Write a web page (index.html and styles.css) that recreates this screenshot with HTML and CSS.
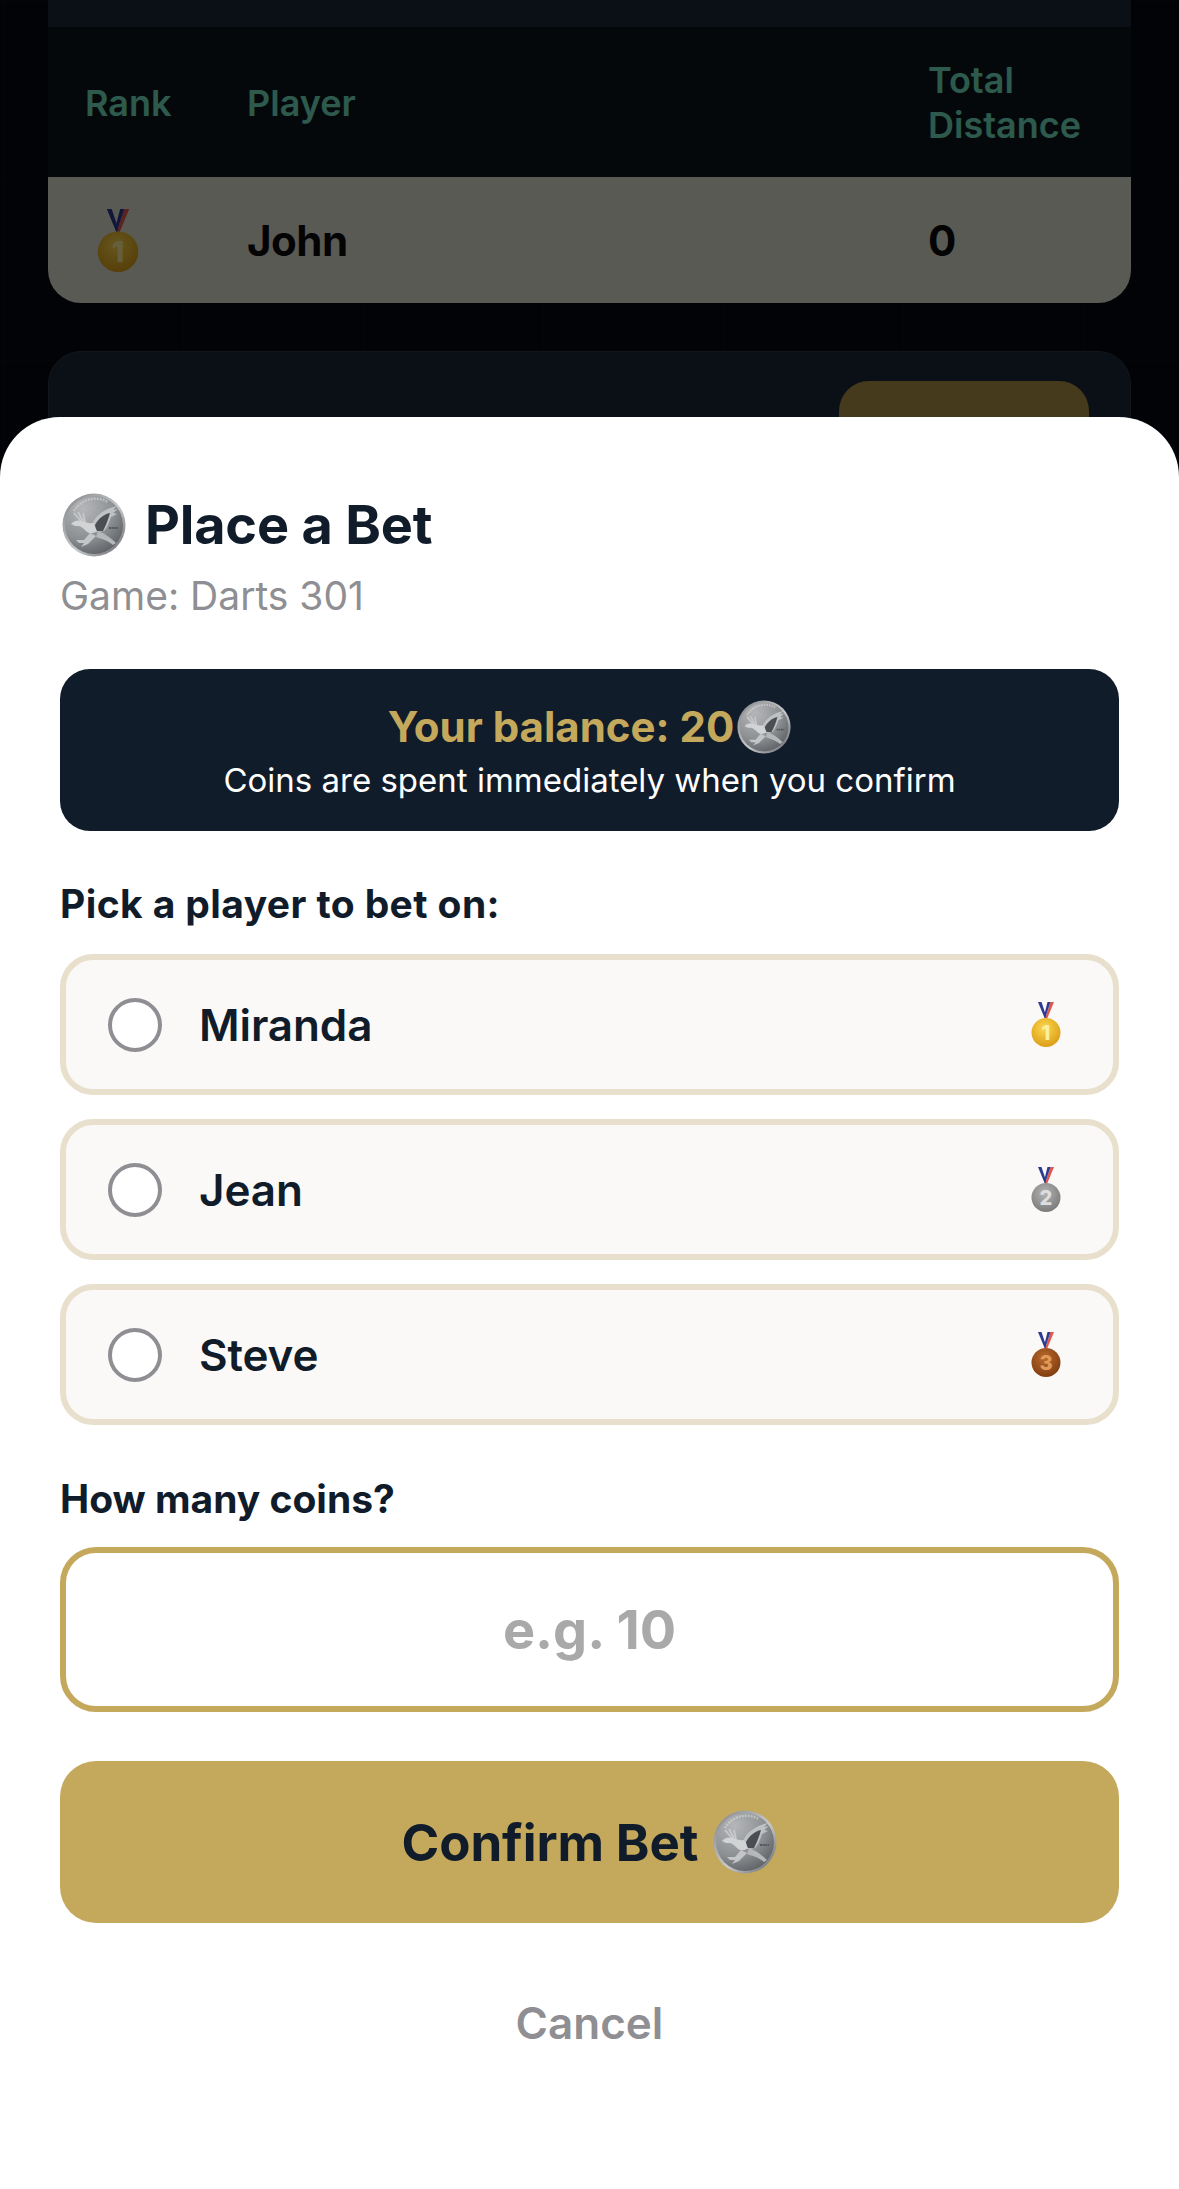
FILE: index.html
```html
<!DOCTYPE html>
<html>
<head>
    <title>Place a Bet</title>
    <link rel="stylesheet" href="styles.css">
</head>
<body>
    <svg class="defs" width="0" height="0">
        <defs>
            <radialGradient id="coinFace" cx="32%" cy="22%" r="95%">
                <stop offset="0" stop-color="#b4b6b8"/>
                <stop offset="0.55" stop-color="#8d9093"/>
                <stop offset="1" stop-color="#505357"/>
            </radialGradient>
            <linearGradient id="coinRim" x1="0" y1="0" x2="1" y2="1">
                <stop offset="0" stop-color="#7f8285"/>
                <stop offset="0.55" stop-color="#c9cacc"/>
                <stop offset="1" stop-color="#5f6266"/>
            </linearGradient>
            <radialGradient id="goldDisc" cx="45%" cy="35%" r="70%">
                <stop offset="0" stop-color="#fbd84f"/>
                <stop offset="1" stop-color="#d99a12"/>
            </radialGradient>
            <radialGradient id="silverDisc" cx="45%" cy="35%" r="70%">
                <stop offset="0" stop-color="#b4b4b4"/>
                <stop offset="1" stop-color="#777777"/>
            </radialGradient>
            <radialGradient id="bronzeDisc" cx="45%" cy="35%" r="70%">
                <stop offset="0" stop-color="#bb6a2c"/>
                <stop offset="1" stop-color="#7c3a10"/>
            </radialGradient>
            <filter id="soft" x="-5%" y="-5%" width="110%" height="110%">
                <feGaussianBlur stdDeviation="0.5"/>
            </filter>
            <symbol id="coin" viewBox="0 0 64 64">
                <circle cx="32" cy="32" r="31.5" fill="url(#coinRim)"/>
                <circle cx="32" cy="32" r="29" fill="url(#coinFace)"/>
                <g filter="url(#soft)">
                    <path d="M12 18A25 25 0 0 1 46 9" fill="none" stroke="#dfe0e1" stroke-width="2.4" stroke-dasharray="2 1" opacity=".5"/>
                    <path d="M19 28L12 20M21 28L16 19M23 29L21 20" fill="none" stroke="#c8c9cb" stroke-width="1.8"/>
                    <path d="M30 31C34 22 42 16 55 13L51 17L56 16L51 20L55 21L49 24C47 30 45 35 42 38L34 39Z" fill="#bfc1c3"/>
                    <path d="M33 32C36 26 42 21 48 20C46 27 44 32 41 38L34 38Z" fill="#4c4f53"/>
                    <path d="M9 31C12 27 17 27 20 28C24 29 27 31 31 30L35 38C31 41 27 41 24 38C21 35 19 33 16 33L13 33Z" fill="#d2d3d5"/>
                    <path d="M36 38C41 40 47 43 54 50L51 52C45 47 40 46 34 44Z" fill="#b5b7b9"/>
                    <path d="M28 40L22 47L14 47L17 50L22 50L19 54L26 51L34 43Z" fill="#c4c5c7"/>
                    <path d="M47 35H56" fill="none" stroke="#54575b" stroke-width="2" stroke-dasharray="2 .6"/>
                </g>
            </symbol>
            <symbol id="ribbon" viewBox="0 0 30 45">
                <path d="M7 0H10.500L15.500 15L14 17Z" fill="#2b3a8f"/>
                <path d="M23 0H19.500L14.500 15L16 17Z" fill="#e0574f"/>
                <path d="M16.500 0H19.500L14.500 15L13.500 12Z" fill="#2b3a8f"/>
            </symbol>
            <symbol id="medal1" viewBox="0 0 30 45">
                <use href="#ribbon" width="30" height="45"/>
                <circle cx="15" cy="30.500" r="14.500" fill="url(#goldDisc)"/>
                <text x="15" y="38" class="medal-digit digit-gold">1</text>
            </symbol>
            <symbol id="medal2" viewBox="0 0 30 45">
                <use href="#ribbon" width="30" height="45"/>
                <circle cx="15" cy="30.500" r="14.500" fill="url(#silverDisc)"/>
                <text x="15" y="38" class="medal-digit digit-silver">2</text>
            </symbol>
            <symbol id="medal3" viewBox="0 0 30 45">
                <use href="#ribbon" width="30" height="45"/>
                <circle cx="15" cy="30.500" r="14.500" fill="url(#bronzeDisc)"/>
                <text x="15" y="38" class="medal-digit digit-bronze">3</text>
            </symbol>
        </defs>
    </svg>

    <div class="page">
        <div class="behind">
            <div class="band"></div>
            <div class="board">
                <div class="board-head">
                    <div>Rank</div>
                    <div>Player</div>
                    <div>Total Distance</div>
                </div>
                <div class="board-row">
                    <svg class="board-medal"><use href="#medal1"/></svg>
                    <div class="board-name">John</div>
                    <div>0</div>
                </div>
            </div>
            <div class="next-card">
                <div class="next-btn"></div>
            </div>
        </div>
        <div class="backdrop"></div>

        <div class="sheet">
            <div class="sheet-title">
                <svg class="coin coin-title"><use href="#coin"/></svg>
                <h2>Place a Bet</h2>
            </div>
            <div class="game-name">Game: Darts 301</div>

            <div class="balance">
                <div class="balance-amount">Your balance: 20<svg class="coin coin-balance"><use href="#coin"/></svg></div>
                <div class="balance-note">Coins are spent immediately when you confirm</div>
            </div>

            <div class="field-label pick-label">Pick a player to bet on:</div>
            <div class="players">
                <label class="player">
                    <span class="radio"></span>
                    <span class="player-name">Miranda</span>
                    <svg class="medal"><use href="#medal1"/></svg>
                </label>
                <label class="player">
                    <span class="radio"></span>
                    <span class="player-name">Jean</span>
                    <svg class="medal"><use href="#medal2"/></svg>
                </label>
                <label class="player">
                    <span class="radio"></span>
                    <span class="player-name">Steve</span>
                    <svg class="medal"><use href="#medal3"/></svg>
                </label>
            </div>

            <div class="field-label coins-label">How many coins?</div>
            <input class="coins-input" type="text" placeholder="e.g. 10">

            <button class="confirm" type="button">Confirm Bet <svg class="coin coin-btn"><use href="#coin"/></svg></button>
            <button class="cancel" type="button">Cancel</button>
        </div>
    </div>
</body>
</html>
```

FILE: styles.css
```css
* {
    box-sizing: border-box;
}

body {
    margin: 0;
    font-family: Inter, "Liberation Sans", sans-serif;
    background: #03080f;
}

.defs {
    position: absolute;
}

.page {
    position: relative;
    height: 2189px;
    overflow: hidden;
    background-image:
        linear-gradient(90deg, rgba(255, 255, 255, 0.025) 1px, transparent 1px),
        linear-gradient(rgba(255, 255, 255, 0.025) 1px, transparent 1px);
    background-size: 180px 180px;
    background-position: 3px 0;
}

.behind {
    padding: 0 48px;
}

.band {
    height: 27px;
    background: #1c2838;
}

.board-head,
.board-row {
    display: grid;
    grid-template-columns: 162px 681px 1fr;
    align-items: center;
    padding-left: 37px;
}

.board-head {
    height: 150px;
    padding-top: 2px;
    background: #0a141c;
    color: #70e1c0;
    font-size: 36px;
    font-weight: 600;
    line-height: 45px;
}

.board-row {
    height: 126px;
    background: #e2e0d5;
    border-radius: 0 0 33px 33px;
    color: #0a0a0a;
    font-size: 42px;
    font-weight: 700;
}

.board-name {
    letter-spacing: -0.5px;
}

.board-medal {
    width: 42px;
    height: 63px;
    margin-left: 12px;
}

.next-card {
    display: flex;
    justify-content: flex-end;
    margin-top: 48px;
    padding: 29px 41px 0 0;
    height: 200px;
    background: #1c2838;
    border: 1px solid #2f3843;
    border-radius: 33px;
}

.next-btn {
    width: 250px;
    height: 120px;
    background: #af9148;
    border-radius: 30px;
}

.backdrop {
    position: absolute;
    inset: 0;
    background: rgba(0, 0, 0, 0.6);
}

.sheet {
    position: absolute;
    top: 417px;
    left: 0;
    right: 0;
    bottom: 0;
    padding: 75px 60px 0;
    background: #fff;
    border-radius: 60px 60px 0 0;
    color: #111c2b;
}

.sheet-title {
    display: flex;
    align-items: center;
    gap: 19px;
    padding-left: 2px;
}

.sheet-title h2 {
    margin: 0;
    font-size: 54px;
    font-weight: 700;
    line-height: 66px;
    letter-spacing: -0.2px;
}

.coin {
    flex: none;
}

.coin-title {
    width: 64px;
    height: 64px;
}

.game-name {
    margin-top: 14px;
    color: #8e8e93;
    font-size: 39px;
    line-height: 48px;
}

.balance {
    margin-top: 49px;
    height: 162px;
    padding-top: 31px;
    background: #111c2b;
    border-radius: 30px;
    text-align: center;
}

.balance-amount {
    display: flex;
    align-items: center;
    justify-content: center;
    color: #c4a95c;
    font-size: 42px;
    font-weight: 700;
    line-height: 54px;
}

.coin-balance {
    width: 54px;
    height: 54px;
    margin-left: 3px;
}

.balance-note {
    margin-top: 5px;
    color: #fff;
    font-size: 33px;
    line-height: 42px;
}

.field-label {
    margin-top: 49px;
    font-size: 39px;
    font-weight: 700;
    line-height: 48px;
}

.pick-label {
    letter-spacing: 0.4px;
}

.players {
    display: flex;
    flex-direction: column;
    gap: 24px;
    margin-top: 26px;
}

.player {
    display: flex;
    align-items: center;
    height: 141px;
    padding: 0 52px 0 42px;
    background: #fbf9f8;
    border: 6px solid #e8e0cc;
    border-radius: 33px;
}

.radio {
    width: 54px;
    height: 54px;
    border: 4.5px solid #8e8e93;
    border-radius: 50%;
    background: #fff;
}

.player-name {
    flex: 1;
    margin-left: 37px;
    font-size: 44px;
    font-weight: 600;
    letter-spacing: -0.1px;
}

.medal {
    width: 30px;
    height: 45px;
}

.medal-digit {
    font-family: Inter, sans-serif;
    font-size: 20px;
    font-weight: 800;
    text-anchor: middle;
}

.digit-gold {
    fill: #fdeea0;
}

.digit-silver {
    fill: #dedede;
}

.digit-bronze {
    fill: #e09a5a;
}

.coins-label {
    margin-top: 50px;
}

.coins-input {
    display: block;
    width: 100%;
    height: 165px;
    margin-top: 24px;
    border: 6px solid #c4a95c;
    border-radius: 36px;
    background: #fff;
    font-family: inherit;
    font-size: 54px;
    font-weight: 700;
    text-align: center;
    outline: none;
}

.coins-input::placeholder {
    color: #a9a9a9;
    opacity: 1;
}

.confirm {
    display: flex;
    align-items: center;
    justify-content: center;
    gap: 15px;
    width: 100%;
    height: 162px;
    margin-top: 49px;
    border: none;
    border-radius: 36px;
    background: #c4a95c;
    color: #111c2b;
    font-family: inherit;
    font-size: 51px;
    font-weight: 700;
    letter-spacing: -0.1px;
}

.coin-btn {
    width: 64px;
    height: 64px;
}

.cancel {
    display: block;
    width: 100%;
    margin-top: 43px;
    padding: 30px 0;
    border: none;
    background: none;
    color: #8e8e93;
    font-family: inherit;
    font-size: 44px;
    font-weight: 600;
}
```
